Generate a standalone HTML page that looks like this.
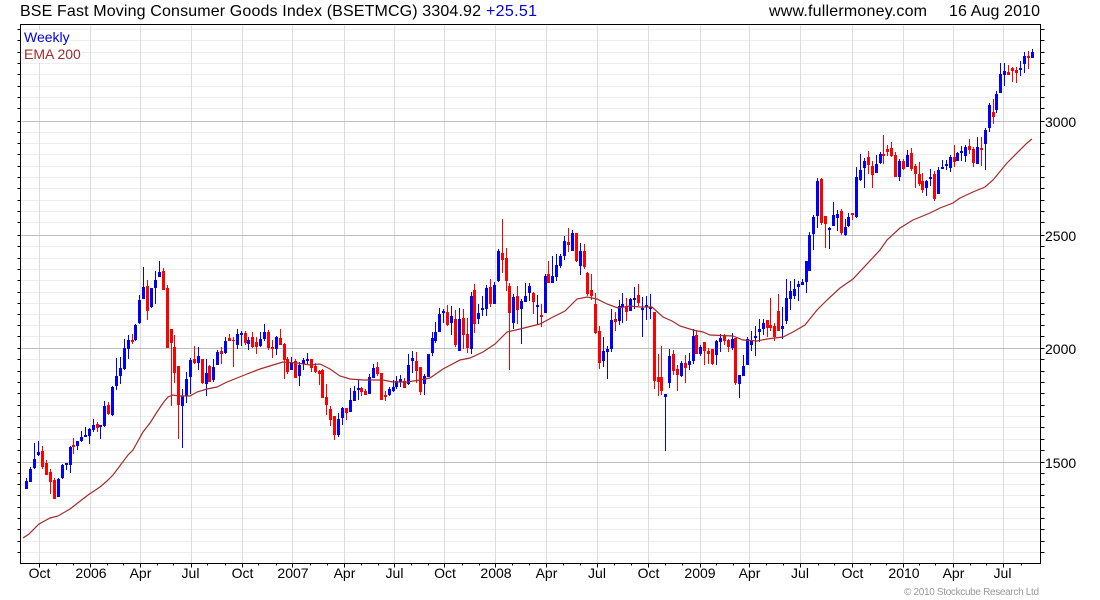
<!DOCTYPE html>
<html><head><meta charset="utf-8"><title>BSE Fast Moving Consumer Goods Index</title>
<style>
html,body{margin:0;padding:0;background:#fff}
svg{display:block}
text{font-family:"Liberation Sans",Arial,sans-serif;font-size:14px;fill:#000}
.t{font-size:16px}
</style></head><body>
<svg width="1100" height="600" viewBox="0 0 1100 600" xmlns="http://www.w3.org/2000/svg">
<rect width="1100" height="600" fill="#fff"/>
<g transform="translate(.5 .5)" shape-rendering="crispEdges" fill="none">
<path stroke="#eeeeee" d="M21 29H1040M21 40H1040M21 52H1040M21 63H1040M21 74H1040M21 86H1040M21 97H1040M21 108H1040M21 132H1040M21 143H1040M21 154H1040M21 166H1040M21 177H1040M21 188H1040M21 200H1040M21 211H1040M21 222H1040M21 246H1040M21 258H1040M21 269H1040M21 280H1040M21 292H1040M21 303H1040M21 314H1040M21 325H1040M21 336H1040M21 359H1040M21 371H1040M21 382H1040M21 393H1040M21 405H1040M21 416H1040M21 427H1040M21 439H1040M21 450H1040M21 473H1040M21 484H1040M21 495H1040M21 507H1040M21 518H1040M21 529H1040M21 541H1040M21 552H1040"/>
<path stroke="#dcdcdc" d="M39 25V563M90 25V563M140 25V563M191 25V563M242 25V563M292 25V563M344 25V563M394 25V563M444 25V563M495 25V563M546 25V563M597 25V563M648 25V563M700 25V563M749 25V563M800 25V563M852 25V563M903 25V563M953 25V563M1003 25V563"/>
<path stroke="#c0c0c0" d="M21 121H1040M21 235H1040M21 348H1040M21 462H1040"/>
<path stroke="#000" d="M20 24H1040V563H20ZM17 29H20M17 40H20M17 52H20M17 63H20M17 74H20M17 86H20M17 97H20M17 108H20M17 121H20M17 132H20M17 143H20M17 154H20M17 166H20M17 177H20M17 188H20M17 200H20M17 211H20M17 222H20M17 235H20M17 246H20M17 258H20M17 269H20M17 280H20M17 292H20M17 303H20M17 314H20M17 325H20M17 336H20M17 348H20M17 359H20M17 371H20M17 382H20M17 393H20M17 405H20M17 416H20M17 427H20M17 439H20M17 450H20M17 462H20M17 473H20M17 484H20M17 495H20M17 507H20M17 518H20M17 529H20M17 541H20M17 552H20M1040 29H1044M1040 40H1044M1040 52H1044M1040 63H1044M1040 74H1044M1040 86H1044M1040 97H1044M1040 108H1044M1040 121H1044M1040 132H1044M1040 143H1044M1040 154H1044M1040 166H1044M1040 177H1044M1040 188H1044M1040 200H1044M1040 211H1044M1040 222H1044M1040 235H1044M1040 246H1044M1040 258H1044M1040 269H1044M1040 280H1044M1040 292H1044M1040 303H1044M1040 314H1044M1040 325H1044M1040 336H1044M1040 348H1044M1040 359H1044M1040 371H1044M1040 382H1044M1040 393H1044M1040 405H1044M1040 416H1044M1040 427H1044M1040 439H1044M1040 450H1044M1040 462H1044M1040 473H1044M1040 484H1044M1040 495H1044M1040 507H1044M1040 518H1044M1040 529H1044M1040 541H1044M1040 552H1044M39 563V567M90 563V567M140 563V567M191 563V567M242 563V567M292 563V567M344 563V567M394 563V567M444 563V567M495 563V567M546 563V567M597 563V567M648 563V567M700 563V567M749 563V567M800 563V567M852 563V567M903 563V567M953 563V567M1003 563V567M56 563V565M73 563V565M107 563V565M123 563V565M157 563V565M173 563V565M207 563V565M225 563V565M258 563V565M276 563V565M310 563V565M327 563V565M361 563V565M378 563V565M411 563V565M428 563V565M462 563V565M479 563V565M512 563V565M529 563V565M563 563V565M580 563V565M614 563V565M631 563V565M665 563V565M682 563V565M716 563V565M733 563V565M766 563V565M783 563V565M818 563V565M834 563V565M870 563V565M886 563V565M919 563V565M935 563V565M970 563V565M986 563V565M1021 563V565"/>
</g>
<rect x="23" y="30" width="47" height="16" fill="#fff"/>
<rect x="23" y="47" width="58" height="16" fill="#fff"/>
<g transform="translate(.5 0)" shape-rendering="crispEdges" fill="none">
<path stroke="#0000ff" stroke-width="1" d="M26 478V489M30 467V482M34 443V469M38 441V456M58 478V497M62 464V479M66 463V470M70 446V473M77 441V450M81 431V442M85 427V437M89 428V444M93 419V432M100 425V439M104 401V427M112 386V416M116 358V390M120 357V384M124 339V370M128 335V359M135 324V341M139 295V324M143 267V299M151 288V308M155 271V304M159 261V277M182 389V448M186 372V403M190 358V394M198 347V370M206 359V396M213 359V382M217 350V365M225 337V354M237 329V349M241 331V346M248 337V350M260 332V347M264 324V341M276 336V355M291 357V370M299 362V386M303 358V370M307 353V365M338 413V437M342 407V425M350 388V412M354 386V401M358 380V400M369 374V394M373 364V378M389 387V396M393 380V392M396 376V389M400 375V387M408 354V385M412 351V373M424 374V395M428 354V377M432 332V356M435 322V343M439 308V332M443 309V323M451 306V335M459 308V351M471 292V354M478 304V324M482 296V316M486 285V316M494 282V304M498 249V282M513 294V329M521 299V344M525 283V302M529 283V301M537 295V324M545 274V313M552 256V283M556 254V281M560 254V268M564 236V260M572 230V251M580 243V275M603 337V367M607 346V379M611 309V352M619 300V325M622 293V323M630 298V311M634 287V309M642 297V337M646 296V320M650 294V319M665 394V451M669 349V388M681 361V377M689 353V370M693 329V364M700 345V356M716 340V365M720 334V352M732 333V350M739 375V398M743 355V376M747 337V365M751 331V351M755 326V356M759 319V342M763 319V335M782 307V339M786 279V324M790 281V310M794 279V299M798 281V301M802 279V285M806 261V293M809 232V271M813 215V250M817 178V228M829 227V249M833 202V226M837 210V231M845 219V236M848 213V227M856 167V218M860 154V181M864 158V188M876 155V173M880 152V164M899 159V181M907 150V167M926 180V196M930 169V186M938 167V194M942 160V169M946 160V170M950 155V172M957 152V161M961 146V161M965 145V162M977 137V164M985 128V170M989 103V132M996 91V113M1000 63V93M1004 63V86M1020 61V76M1024 52V73M1032 49V58"/>
<path stroke="#0000ff" stroke-width="3" d="M26 481V489M30 469V482M34 459V468M38 452V455M58 479V497M62 465V478M66 463V465M70 447V465M77 441V446M81 437V441M85 435V437M89 429V436M93 425V430M100 425V427M104 406V426M112 387V415M116 376V386M120 368V376M124 348V369M128 340V349M135 325V340M139 300V323M143 287V299M151 288V307M155 280V288M159 272V277M182 396V406M186 379V396M190 360V377M198 356V363M206 373V384M213 367V380M217 352V365M225 341V353M237 334V345M241 333V335M248 340V344M260 339V346M264 332V339M276 337V349M291 363V370M299 365V376M303 360V364M307 359V361M338 419V435M342 408V418M350 400V412M354 391V401M358 388V390M369 377V394M373 368V378M389 389V395M393 387V391M396 381V387M400 379V382M408 365V384M412 358V361M424 376V384M428 354V377M432 338V353M435 332V341M439 314V332M443 311V313M451 316V323M459 319V351M471 296V349M478 313V319M482 308V310M486 288V309M494 285V304M498 251V281M513 297V323M521 301V309M525 296V302M529 286V293M537 305V307M545 276V313M552 276V283M556 265V277M560 256V266M564 241V256M572 233V251M580 251V266M603 351V361M607 349V352M611 320V349M619 306V321M622 304V307M630 299V311M634 298V300M642 308V310M646 305V307M650 307V309M665 394V397M669 356V383M681 363V376M689 361V365M693 336V361M700 347V354M716 341V355M720 338V342M732 339V348M739 375V384M743 366V376M747 339V365M751 341V345M755 336V338M759 329V332M763 323V329M782 326V329M786 298V321M790 291V299M794 289V296M798 284V287M802 282V285M806 261V282M809 235V271M813 217V234M817 181V216M829 228V230M833 215V226M837 214V218M845 227V235M848 217V226M856 177V217M860 170V180M864 161V168M876 164V173M880 154V163M899 161V177M907 155V167M926 181V188M930 177V179M938 170V194M942 167V169M946 164V166M950 157V168M957 153V161M961 151V153M965 147V156M977 147V164M985 130V144M989 105V128M996 94V110M1000 74V93M1004 71V75M1020 68V70M1024 56V64M1032 52V58"/>
<path stroke="#ff0000" stroke-width="1" d="M42 446V469M46 460V475M50 469V494M54 478V499M73 438V454M97 422V432M108 402V415M132 334V344M147 280V320M163 268V290M167 285V348M171 329V406M174 335V383M178 366V439M194 346V364M202 359V384M209 365V382M221 347V364M229 334V341M233 337V367M245 331V345M252 332V348M256 337V354M268 330V350M272 340V358M280 329V345M284 343V379M287 357V374M295 359V378M311 359V372M315 363V373M319 370V385M322 369V398M326 384V415M330 406V426M334 416V440M346 408V420M361 387V396M365 389V395M377 362V376M381 373V400M385 391V401M404 378V388M416 352V383M420 367V395M447 305V326M455 310V347M463 309V349M467 318V353M474 284V333M490 279V307M502 219V273M506 248V291M509 283V370M517 286V324M533 292V314M541 304V327M548 261V283M568 228V252M576 233V262M584 244V269M587 272V296M591 274V300M595 293V334M599 326V369M615 312V331M626 298V321M638 284V306M654 312V389M658 354V396M661 346V395M673 350V375M677 365V391M685 355V383M696 331V354M704 342V365M708 348V364M712 349V365M724 334V345M728 339V352M735 338V385M767 320V337M770 298V331M774 323V341M778 294V331M821 178V225M825 216V248M841 209V235M852 213V220M868 151V174M872 161V188M883 135V164M887 145V156M891 142V157M895 152V177M903 159V170M911 148V171M915 164V188M919 162V186M922 173V193M934 171V201M954 145V167M969 139V154M973 147V167M981 137V166M993 99V124M1008 65V75M1012 67V82M1016 67V83M1028 51V69"/>
<path stroke="#ff0000" stroke-width="3" d="M42 451V467M46 463V475M50 472V482M54 480V499M73 445V447M97 424V428M108 405V414M132 340V342M147 286V311M163 271V290M167 288V348M171 329V343M174 347V373M178 366V405M194 359V363M202 359V383M209 366V382M221 351V354M229 338V341M233 340V341M245 333V343M252 337V347M256 342V347M268 332V348M272 347V349M280 338V345M284 344V360M287 359V372M295 361V378M311 359V368M315 366V372M319 371V374M322 370V398M326 397V405M330 409V420M334 416V435M346 408V413M361 388V392M365 391V395M377 367V374M381 373V400M385 395V397M404 381V388M416 361V371M420 367V392M447 312V325M455 319V345M463 318V335M467 334V348M474 290V324M490 287V304M502 253V260M506 258V281M509 286V313M517 296V310M533 293V302M541 315V317M548 274V283M568 242V245M576 233V261M584 251V267M587 273V294M591 290V296M595 304V333M599 331V363M615 319V322M626 307V312M638 295V303M654 312V381M658 377V382M661 377V391M673 354V371M677 369V375M685 363V368M696 335V354M704 342V351M708 351V354M712 349V364M724 336V341M728 340V347M735 338V383M767 320V328M770 325V328M774 326V337M778 311V331M821 179V223M825 216V224M841 211V233M852 213V215M868 157V165M872 166V175M883 154V156M887 149V152M891 148V156M895 155V177M903 161V169M911 153V169M915 166V174M919 174V184M922 181V190M934 174V199M954 157V162M969 146V150M973 149V163M981 148V150M993 112V117M1008 72V75M1012 68V71M1016 70V73M1028 56V58"/>
</g>
<path fill="none" stroke="#a52a2a" stroke-width="1.2" d="M23 538L29 534 39 524 50 518 58 516 70 509 88 495 100 487 107 481 113 475 128 455 133 450 143 432 150 423 157 412 163 403 168 397 173 395 178 396 190 396 197 392 207 389 217 387 227 382 237 378 247 374 260 369 273 365 283 362 297 363 310 365 320 364 330 369 340 376 350 379 363 380 383 380 393 382 407 382 420 380 430 378 443 369 460 360 470 358 483 352 495 344 507 332 520 329 540 324 553 317 565 311 577 299 587 297 597 299 607 304 618 308 630 306 640 307 652 307 663 317 672 321 680 326 693 330 703 332 710 335 733 336 743 340 757 341 767 339 783 337 793 332 805 325 817 310 827 300 840 288 853 279 880 250 887 240 900 228 913 220 930 213 940 208 953 203 960 198 973 192 985 187 993 180 1007 163 1027 143 1032 139"/>
<text class="t" x="20" y="16" textLength="461">BSE Fast Moving Consumer Goods Index (BSETMCG) 3304.92</text>
<text class="t" x="486" y="16" textLength="51" style="fill:#0000e0">+25.51</text>
<text class="t" x="769" y="16" textLength="158">www.fullermoney.com</text>
<text class="t" x="949" y="16" textLength="91">16 Aug 2010</text>
<text x="24" y="42" style="fill:#0000e0">Weekly</text>
<text x="24" y="59" style="fill:#a52a2a">EMA 200</text>
<text x="1045" y="127">3000</text>
<text x="1045" y="241">2500</text>
<text x="1045" y="354">2000</text>
<text x="1045" y="468">1500</text>
<g text-anchor="middle">
<text x="39.5" y="578">Oct</text><text x="91" y="578">2006</text><text x="140.5" y="578">Apr</text><text x="190.5" y="578">Jul</text><text x="242.5" y="578">Oct</text><text x="293" y="578">2007</text><text x="344.5" y="578">Apr</text><text x="394.5" y="578">Jul</text><text x="445" y="578">Oct</text><text x="496" y="578">2008</text><text x="546.5" y="578">Apr</text><text x="597" y="578">Jul</text><text x="648.5" y="578">Oct</text><text x="700" y="578">2009</text><text x="749.5" y="578">Apr</text><text x="800" y="578">Jul</text><text x="852.5" y="578">Oct</text><text x="904" y="578">2010</text><text x="953.5" y="578">Apr</text><text x="1002.5" y="578">Jul</text>
</g>
<text x="904" y="595" textLength="135" style="font-size:10px;fill:#999">© 2010 Stockcube Research Ltd</text>
</svg>
</body></html>
